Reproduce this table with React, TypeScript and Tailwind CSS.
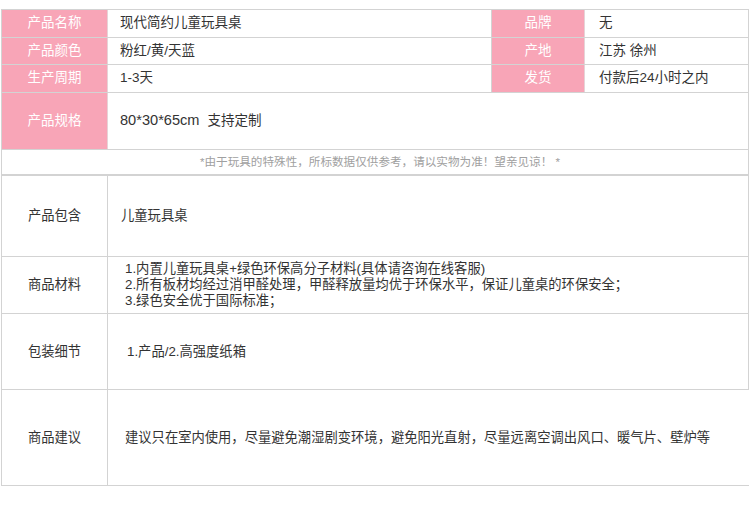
const font = { fontFamily: '"Liberation Sans", "Noto Sans CJK SC", sans-serif' };

const topRows = [
  { label: "产品名称", value: "现代简约儿童玩具桌", label2: "品牌", value2: "无", h: "h-[28px]" },
  { label: "产品颜色", value: "粉红/黄/天蓝", label2: "产地", value2: "江苏 徐州", h: "h-[27px]" },
  { label: "生产周期", value: "1-3天", label2: "发货", value2: "付款后24小时之内", h: "h-[28px]" },
];

const bottomRows = [
  { label: "产品包含", lines: ["儿童玩具桌"], h: "h-[81px]", pl: "pl-[13px]", last: false },
  {
    label: "商品材料",
    lines: [
      "1.内置儿童玩具桌+绿色环保高分子材料(具体请咨询在线客服)",
      "2.所有板材均经过消甲醛处理，甲醛释放量均优于环保水平，保证儿童桌的环保安全；",
      "3.绿色安全优于国际标准；",
    ],
    h: "h-[57px]",
    pl: "pl-[17px]",
    last: false,
  },
  { label: "包装细节", lines: ["1.产品/2.高强度纸箱"], h: "h-[76px]", pl: "pl-[19px]", last: false },
  {
    label: "商品建议",
    lines: ["建议只在室内使用，尽量避免潮湿剧变环境，避免阳光直射，尽量远离空调出风口、暖气片、壁炉等"],
    h: "h-[96px]",
    pl: "pl-[17px]",
    last: true,
  },
];

export default function App() {
  return (
    <div className="h-[516px] w-[750px] bg-white pt-[9px] pl-[1px] text-[#333]" style={font}>
      <div className="w-[748px] border-t border-l border-r border-[#d3d3d3]">
        {topRows.map((row) => (
          <div key={row.label} className={`flex ${row.h} border-b border-[#d3d3d3] text-[13.5px]`}>
            <div className="flex w-[106px] items-center justify-center border-r border-[#e6d3d7] bg-[#f8a5b7] text-white">
              {row.label}
            </div>
            <div className="flex w-[384px] items-center border-r border-[#d3d3d3] pl-[12px]">{row.value}</div>
            <div className="flex w-[93px] items-center justify-center border-r border-[#e6d3d7] bg-[#f8a5b7] text-white">
              {row.label2}
            </div>
            <div className="flex flex-1 items-center pl-[14px]">{row.value2}</div>
          </div>
        ))}
        <div className="flex h-[57px] border-b border-[#d3d3d3] text-[13.5px]">
          <div className="flex w-[106px] items-center justify-center border-r border-[#e6d3d7] bg-[#f8a5b7] text-white">
            产品规格
          </div>
          <div className="flex flex-1 items-center pl-[12px]">
            <span className="text-[14.6px]">80*30*65cm</span>
            <span className="ml-[8px]">支持定制</span>
          </div>
        </div>
        <div className="flex h-[25px] items-center justify-center border-b border-[#d3d3d3] pl-[10px] text-[11.6px] text-[#a0a0a0]">
          *由于玩具的特殊性，所标数据仅供参考，请以实物为准！望亲见谅！ *
        </div>
      </div>

      <div className="w-[748px] border-t border-l border-[#d3d3d3]">
        {bottomRows.map((row) => (
          <div
            key={row.label}
            className={`flex ${row.h} border-b border-[#d3d3d3] text-[13.3px] ${row.last ? "" : "border-r"}`}
          >
            <div className="flex w-[106px] items-center justify-center border-r border-[#d3d3d3]">{row.label}</div>
            <div className={`flex flex-1 flex-col justify-center ${row.pl} leading-[16px]`}>
              {row.lines.map((line) => (
                <p key={line}>{line}</p>
              ))}
            </div>
          </div>
        ))}
      </div>
    </div>
  );
}
